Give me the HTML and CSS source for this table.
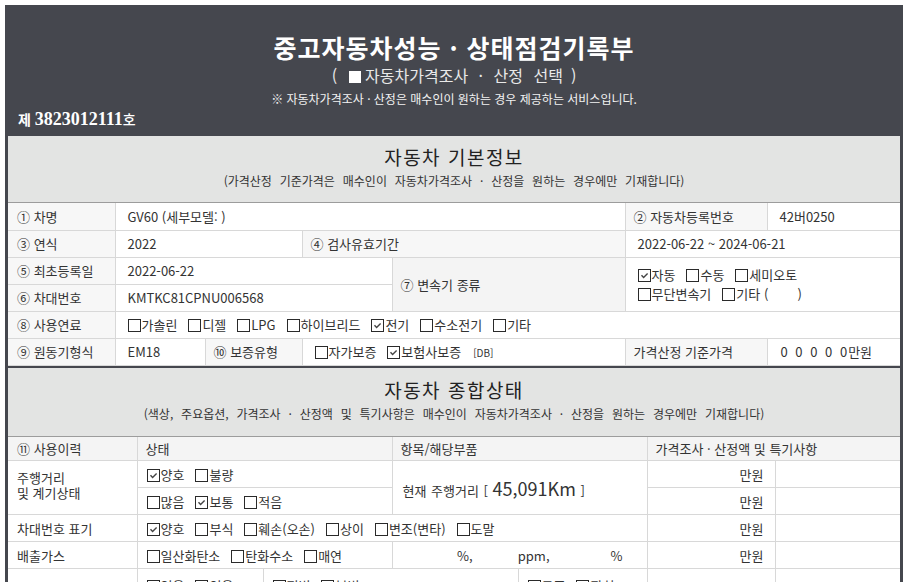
FILE: index.html
```html
<!DOCTYPE html>
<html lang="ko">
<head>
<meta charset="utf-8">
<title>중고자동차성능 · 상태점검기록부</title>
<link rel="stylesheet" href="styles.css">
</head>
<body>
<div class="frame">
  <header class="hero">
    <h1>중고자동차성능 · 상태점검기록부</h1>
    <p class="sel"><span class="paren">(</span><span class="sq"></span>자동차가격조사 · 산정 선택<span class="paren r">)</span></p>
    <p class="note">※ 자동차가격조사 · 산정은 매수인이 원하는 경우 제공하는 서비스입니다.</p>
    <p class="no">제 <b>3823012111</b><span class="ho">호</span></p>
  </header>

  <div class="sheet">
    <section class="sec first">
      <div class="sec-head">
        <h2>자동차 기본정보</h2>
        <p>(가격산정 기준가격은 매수인이 자동차가격조사 · 산정을 원하는 경우에만 기재합니다)</p>
      </div>
      <table class="grid basic">
        <colgroup>
          <col style="width:107px"><col style="width:90px"><col style="width:97px"><col style="width:90px"><col style="width:233px"><col style="width:142px"><col style="width:133px">
        </colgroup>
        <tr>
          <th>① 차명</th><td colspan="4">GV60 (세부모델: )</td><th>② 자동차등록번호</th><td>42버0250</td>
        </tr>
        <tr>
          <th>③ 연식</th><td colspan="2">2022</td><th colspan="2">④ 검사유효기간</th><td colspan="2">2022-06-22 ~ 2024-06-21</td>
        </tr>
        <tr>
          <th>⑤ 최초등록일</th><td colspan="3">2022-06-22</td><th rowspan="2" class="gear">⑦ 변속기 종류</th>
          <td colspan="2" rowspan="2" class="two">
            <div class="line"><span class="opt"><span class="cb on"><svg viewBox="0 0 11 11"><path d="M2.5 5.2 4.6 7.4 8.6 3.4"/></svg></span>자동</span><span class="opt"><span class="cb"></span>수동</span><span class="opt"><span class="cb"></span>세미오토</span></div>
            <div class="line"><span class="opt"><span class="cb"></span>무단변속기</span><span class="opt"><span class="cb"></span>기타 (&nbsp;&nbsp;&nbsp;&nbsp;&nbsp;&nbsp;&nbsp;&nbsp;)</span></div>
          </td>
        </tr>
        <tr>
          <th>⑥ 차대번호</th><td colspan="3">KMTKC81CPNU006568</td>
        </tr>
        <tr>
          <th>⑧ 사용연료</th>
          <td colspan="6"><span class="opt"><span class="cb"></span>가솔린</span><span class="opt"><span class="cb"></span>디젤</span><span class="opt"><span class="cb"></span>LPG</span><span class="opt"><span class="cb"></span>하이브리드</span><span class="opt"><span class="cb on"><svg viewBox="0 0 11 11"><path d="M2.5 5.2 4.6 7.4 8.6 3.4"/></svg></span>전기</span><span class="opt"><span class="cb"></span>수소전기</span><span class="opt"><span class="cb"></span>기타</span></td>
        </tr>
        <tr>
          <th>⑨ 원동기형식</th><td>EM18</td><th>⑩ 보증유형</th>
          <td colspan="2" class="pad13"><span class="opt"><span class="cb"></span>자가보증</span><span class="opt"><span class="cb on"><svg viewBox="0 0 11 11"><path d="M2.5 5.2 4.6 7.4 8.6 3.4"/></svg></span>보험사보증</span><span class="db">[DB]</span></td>
          <th>가격산정 기준가격</th><td class="price">0 0 0 0 0<span class="unit">만원</span></td>
        </tr>
      </table>
    </section>

    <section class="sec second">
      <div class="sec-head">
        <h2>자동차 종합상태</h2>
        <p>(색상, 주요옵션, 가격조사 · 산정액 및 특기사항은 매수인이 자동차가격조사 · 산정을 원하는 경우에만 기재합니다)</p>
      </div>
      <table class="grid status">
        <colgroup>
          <col style="width:129px"><col style="width:126px"><col style="width:129px"><col style="width:126px"><col style="width:129px"><col style="width:128px"><col style="width:125px">
        </colgroup>
        <tr class="hrow">
          <th>⑪ 사용이력</th><th colspan="2">상태</th><th colspan="2">항목/해당부품</th><th colspan="2" class="dk">가격조사 · 산정액 및 특기사항</th>
        </tr>
        <tr class="r27">
          <td rowspan="2" class="lbl2">주행거리<br>및 계기상태</td>
          <td colspan="2"><span class="opt"><span class="cb on"><svg viewBox="0 0 11 11"><path d="M2.5 5.2 4.6 7.4 8.6 3.4"/></svg></span>양호</span><span class="opt"><span class="cb"></span>불량</span></td>
          <td colspan="2" rowspan="2" class="km">현재 주행거리 [ <span class="big">45,091Km</span> ]</td>
          <td class="won dk">만원</td><td></td>
        </tr>
        <tr class="r28">
          <td colspan="2"><span class="opt"><span class="cb"></span>많음</span><span class="opt"><span class="cb on"><svg viewBox="0 0 11 11"><path d="M2.5 5.2 4.6 7.4 8.6 3.4"/></svg></span>보통</span><span class="opt"><span class="cb"></span>적음</span></td>
          <td class="won dk">만원</td><td></td>
        </tr>
        <tr class="r26">
          <td class="lbl">차대번호 표기</td>
          <td colspan="4"><span class="opt"><span class="cb on"><svg viewBox="0 0 11 11"><path d="M2.5 5.2 4.6 7.4 8.6 3.4"/></svg></span>양호</span><span class="opt"><span class="cb"></span>부식</span><span class="opt"><span class="cb"></span>훼손(오손)</span><span class="opt"><span class="cb"></span>상이</span><span class="opt"><span class="cb"></span>변조(변타)</span><span class="opt"><span class="cb"></span>도말</span></td>
          <td class="won dk">만원</td><td></td>
        </tr>
        <tr class="r27">
          <td class="lbl">배출가스</td>
          <td colspan="2"><span class="opt"><span class="cb"></span>일산화탄소</span><span class="opt"><span class="cb"></span>탄화수소</span><span class="opt"><span class="cb"></span>매연</span></td>
          <td colspan="2" class="gas"><span class="g1">%,</span><span class="g2">ppm,</span><span class="g3">%</span></td>
          <td class="won dk">만원</td><td></td>
        </tr>
        <tr class="low">
          <td class="lbl"></td>
          <td><span class="opt"><span class="cb"></span>없음</span><span class="opt"><span class="cb"></span>있음</span></td>
          <td colspan="2"><span class="opt"><span class="cb"></span>적법</span><span class="opt"><span class="cb"></span>불법</span></td>
          <td><span class="opt"><span class="cb"></span>구조</span><span class="opt"><span class="cb"></span>장치</span></td>
          <td class="dk"></td><td></td>
        </tr>
      </table>
    </section>
  </div>
</div>
</body>
</html>
```

FILE: styles.css
```css
* { box-sizing: border-box; }

body {
  margin: 0;
  padding: 5px 0 0 5px;
  background: #fff;
  font-family: "Noto Sans CJK KR", "Noto Sans", sans-serif;
  color: #333;
}

.frame {
  width: 898px;
  padding: 0 3px;
  background: #45474e;
}

/* ---------- dark title header ---------- */
.hero {
  height: 131px;
  padding-top: 27px;
  color: #fff;
  text-align: center;
}

.hero h1 {
  margin: 0;
  font-size: 25px;
  line-height: 30px;
  font-weight: 700;
  letter-spacing: 1px;
}

.sel {
  margin: 3px 0 0;
  font-size: 16px;
  line-height: 20px;
  color: #e9e9e9;
  word-spacing: 6px;
}

.sel .paren { margin-right: 12px; }
.sel .paren.r { margin: 0 0 0 8px; }

.sq {
  display: inline-block;
  width: 12px;
  height: 12px;
  background: #fff;
  margin-right: 4px;
  vertical-align: -1px;
}

.note {
  margin: 6px 0 0;
  font-size: 12px;
  line-height: 16px;
  color: #f2f2f2;
}

.no {
  margin: 3px 0 0 10px;
  text-align: left;
  font-size: 14px;
  line-height: 18px;
  font-weight: 700;
}

.no b {
  font-family: "Liberation Serif", serif;
  font-size: 18px;
  font-weight: 700;
}

.no .ho { font-weight: 500; }

/* ---------- sheet ---------- */
.sheet {
  background: #fff;
}

.sec-head {
  background: #e3e4e3;
  border-bottom: 1px solid #9c9c9c;
  text-align: center;
  padding-top: 9px;
}

.first .sec-head { height: 67px; }
.second .sec-head { height: 69px; padding-top: 10px; }

.second { border-top: 2px solid #45474e; }

.sec-head h2 {
  margin: 0;
  font-size: 19px;
  line-height: 24px;
  font-weight: 400;
  letter-spacing: 1.5px;
  color: #222;
}

.sec-head p {
  margin: 4px 0 0;
  font-size: 12px;
  line-height: 16px;
  color: #333;
  word-spacing: 4.5px;
}

/* ---------- tables ---------- */
.grid {
  width: 892px;
  table-layout: fixed;
  border-collapse: collapse;
  font-size: 13px;
  color: #333;
}

.grid th,
.grid td {
  border: 1px solid #d8d8d8;
  padding: 0 0 0 12px;
  height: 27px;
  text-align: left;
  font-weight: 400;
  white-space: nowrap;
  overflow: hidden;
}

.grid tr > :first-child { border-left: 0; }
.grid tr > :last-child { border-right: 0; }
.grid tr:first-child > * { border-top: 0; }

.grid th {
  background: #f7f7f7;
  padding-left: 8px;
}

.basic th:first-child { padding-left: 9px; }

.gear { background: #f4f4f4 !important; }

.two { line-height: 19px; padding-top: 1px; }

.pad13 { padding-left: 12px !important; }

.opt {
  display: inline-block;
  margin-right: 11px;
}

.cb {
  display: inline-block;
  width: 13px;
  height: 13px;
  border: 1px solid #2a2a2a;
  background: #fff;
  margin-right: 1px;
  vertical-align: -2px;
}

.cb svg {
  display: block;
  width: 11px;
  height: 11px;
  fill: none;
  stroke: #444;
  stroke-width: 1.4;
}

.db {
  font-size: 10px;
  margin-left: 1px;
}

.price { word-spacing: 4px; padding-left: 13px !important; }
.price .unit { word-spacing: 0; margin-left: 1px; }

/* section 2 */
.status .hrow th {
  height: 24px;
  background: #f4f4f4;
  padding-left: 8px;
}

.status .hrow th:first-child { padding-left: 9px; }

.status td { padding-left: 9px; }
.status td.lbl,
.status td.lbl2 { padding-left: 9px; background: #fff; }

.lbl2 { line-height: 15px; padding-bottom: 5px !important; }

.r26 > * { height: 26px; }
.r28 > * { height: 28px; }

.status .dk { border-left: 1px solid #3a3a3a; }
.status .hrow .dk { border-left-color: #a9a9a9; }

.won {
  text-align: right !important;
  padding: 0 11px 0 0 !important;
}

.km { padding-left: 10px !important; word-spacing: 1px; }
.km .big { font-size: 18px; }

.gas { padding: 0 !important; }
.gas span { display: inline-block; text-align: right; }
.gas .g1 { width: 80px; }
.gas .g2 { width: 77px; }
.gas .g3 { width: 73px; }

.low > * { height: 34px; vertical-align: top; padding-top: 7px !important; }
```
